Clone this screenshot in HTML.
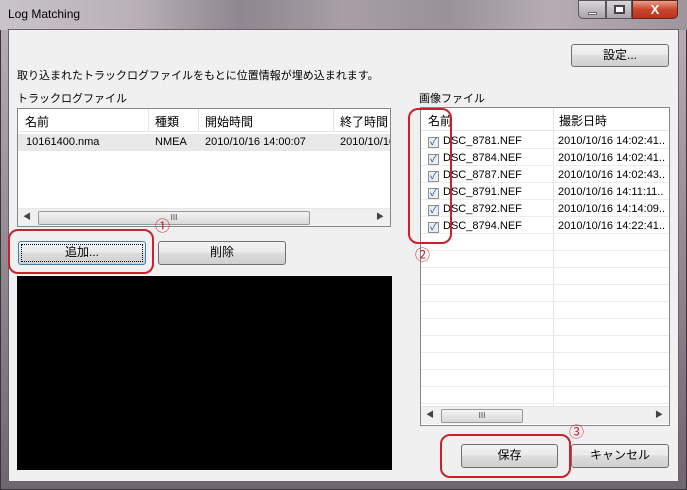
<!DOCTYPE html>
<html><head><meta charset="utf-8"><style>
*{margin:0;padding:0;box-sizing:border-box}
body{width:687px;height:490px;overflow:hidden;position:relative;font-family:"Liberation Sans","Noto Sans CJK JP",sans-serif;font-size:11px;color:#000;background:#7d7580}
.a{position:absolute}
.title{left:0;top:0;width:687px;height:30px;background:linear-gradient(90deg,#c9c4c8 0%,#b8b0b6 20%,#8e8690 35%,#a79fa5 50%,#9a9299 65%,#b5adb3 80%,#9d959b 100%)}
.frame{left:0;top:0;width:687px;height:490px;border:1px solid #3a3438;border-radius:6px 6px 0 0;background:linear-gradient(180deg,#b9b1b7,#8d838b 60%,#6f6670)}
.client{left:8px;top:29px;width:671px;height:453px;background:#f0f0f0;border:1px solid #6b6269}
.btn{position:absolute;border:1px solid #707070;border-radius:3px;background:linear-gradient(#f2f2f2 0%,#ebebeb 45%,#dddddd 50%,#cfcfcf 100%);text-align:center;font-size:12px;line-height:21px}
.list{position:absolute;background:#fff;border:1px solid #828790}
.hdr{position:absolute;font-size:12px}
.red{position:absolute;border:2px solid #c8232c;border-radius:10px}
.num{position:absolute;color:#c8232c;font-size:15px}
.row{position:absolute;left:0;height:17px;font-size:11px;line-height:17px}
.cb{position:absolute;width:11px;height:11px;border:1px solid #8f8f8f;background:#e8eef6;font-size:10px;line-height:9px;color:#2a4a90;text-align:center}
.sb{position:absolute;height:18px;background:#f0f0f0;border-top:1px solid #e6e6e6}
.thumb{position:absolute;top:2px;height:14px;border:1px solid #9a9a9a;border-radius:2px;background:linear-gradient(#f3f3f3,#d8d8d8);font-size:8px;text-align:center;line-height:12px;color:#444}
</style></head><body>
<div class="a frame"></div>
<div class="a title"></div>
<div class="a" style="left:8px;top:7px;font-size:12px;color:#000">Log Matching</div>
<div class="a" style="left:578px;top:0;width:28px;height:19px;border:1px solid #5a555a;border-radius:0 0 0 5px;background:linear-gradient(#d9d6d9,#a9a4aa)"><div class="a" style="left:9px;top:11px;width:9px;height:3px;background:#fff;border:1px solid #666"></div></div>
<div class="a" style="left:606px;top:0;width:26px;height:19px;border:1px solid #5a555a;background:linear-gradient(#d9d6d9,#a9a4aa)"><div class="a" style="left:7px;top:4px;width:11px;height:9px;border:2px solid #444;background:#fff"></div></div>
<div class="a" style="left:632px;top:0;width:46px;height:19px;border:1px solid #5a2a22;border-radius:0 0 5px 0;background:linear-gradient(#e8a08a,#c9452c 50%,#b8341e);color:#fff;font-weight:bold;font-size:13px;text-align:center;line-height:17px">X</div>
<div class="a client"></div>

<div class="btn" style="left:571px;top:44px;width:98px;height:23px">設定...</div>
<div class="a" style="left:17px;top:67px;font-size:11px">取り込まれたトラックログファイルをもとに位置情報が埋め込まれます。</div>
<div class="a" style="left:17px;top:90px;font-size:11px">トラックログファイル</div>

<div class="list" style="left:17px;top:108px;width:374px;height:119px">
 <div class="a" style="left:0;top:0;width:372px;height:23px;border-bottom:1px solid #e5e5e5"></div>
 <div class="a" style="left:130px;top:0;width:1px;height:22px;background:#e5e5e5"></div>
 <div class="a" style="left:180px;top:0;width:1px;height:22px;background:#e5e5e5"></div>
 <div class="a" style="left:315px;top:0;width:1px;height:22px;background:#e5e5e5"></div>
 <div class="hdr" style="left:7px;top:4px">名前</div>
 <div class="hdr" style="left:137px;top:4px">種類</div>
 <div class="hdr" style="left:187px;top:4px">開始時間</div>
 <div class="hdr" style="left:322px;top:4px;white-space:nowrap">終了時間</div>
 <div class="row" style="top:25px;width:372px;background:#e8e8e8"></div>
 <div class="row" style="top:25px;left:8px">10161400.nma</div>
 <div class="row" style="top:25px;left:137px">NMEA</div>
 <div class="row" style="top:25px;left:187px">2010/10/16 14:00:07</div>
 <div class="row" style="top:25px;left:322px;width:50px;overflow:hidden;white-space:nowrap">2010/10/16</div>
 <div class="sb" style="left:0;top:99px;width:372px"><span class="a" style="left:5px;top:2px;font-size:8px;color:#444">◀</span><div class="thumb" style="left:20px;width:272px">III</div><span class="a" style="left:358px;top:2px;font-size:8px;color:#444">▶</span></div>
</div>

<div class="btn" style="left:18px;top:241px;width:128px;height:24px;border-color:#3c7fb1;outline:1px dotted #000;outline-offset:-4px">追加...</div>
<div class="btn" style="left:158px;top:241px;width:128px;height:24px">削除</div>
<div class="red" style="left:8px;top:229px;width:146px;height:45px"></div>
<div class="num" style="left:155px;top:215px">①</div>

<div class="a" style="left:17px;top:276px;width:375px;height:194px;background:#000"></div>

<div class="a" style="left:419px;top:90px;font-size:11px">画像ファイル</div>
<div class="list" style="left:420px;top:107px;width:250px;height:319px">
 <div class="a" style="left:0;top:0;width:248px;height:23px;border-bottom:1px solid #e5e5e5"></div>
 <div class="a" style="left:132px;top:0;width:1px;height:298px;background:#e5e5e5"></div>
 <div class="hdr" style="left:7px;top:4px">名前</div>
 <div class="hdr" style="left:138px;top:4px">撮影日時</div>
 <div class="a" style="left:0;top:24px;width:248px;height:274px;background:repeating-linear-gradient(180deg,transparent 0,transparent 16px,#ececec 16px,#ececec 17px)"></div>
 <div class="cb" style="left:7px;top:29px">✓</div><div class="row" style="left:22px;top:25px">DSC_8781.NEF</div><div class="row" style="left:137px;top:25px">2010/10/16 14:02:41..</div>
 <div class="cb" style="left:7px;top:46px">✓</div><div class="row" style="left:22px;top:42px">DSC_8784.NEF</div><div class="row" style="left:137px;top:42px">2010/10/16 14:02:41..</div>
 <div class="cb" style="left:7px;top:63px">✓</div><div class="row" style="left:22px;top:59px">DSC_8787.NEF</div><div class="row" style="left:137px;top:59px">2010/10/16 14:02:43..</div>
 <div class="cb" style="left:7px;top:80px">✓</div><div class="row" style="left:22px;top:76px">DSC_8791.NEF</div><div class="row" style="left:137px;top:76px">2010/10/16 14:11:11..</div>
 <div class="cb" style="left:7px;top:97px">✓</div><div class="row" style="left:22px;top:93px">DSC_8792.NEF</div><div class="row" style="left:137px;top:93px">2010/10/16 14:14:09..</div>
 <div class="cb" style="left:7px;top:114px">✓</div><div class="row" style="left:22px;top:110px">DSC_8794.NEF</div><div class="row" style="left:137px;top:110px">2010/10/16 14:22:41..</div>
 <div class="sb" style="left:0;top:298px;width:248px"><span class="a" style="left:5px;top:2px;font-size:8px;color:#444">◀</span><div class="thumb" style="left:20px;width:82px">III</div><span class="a" style="left:234px;top:2px;font-size:8px;color:#444">▶</span></div>
</div>
<div class="red" style="left:408px;top:108px;width:44px;height:136px"></div>
<div class="num" style="left:415px;top:244px">②</div>

<div class="btn" style="left:461px;top:444px;width:97px;height:24px">保存</div>
<div class="btn" style="left:571px;top:444px;width:98px;height:24px">キャンセル</div>
<div class="red" style="left:440px;top:434px;width:131px;height:44px"></div>
<div class="num" style="left:569px;top:421px">③</div>
</body></html>
